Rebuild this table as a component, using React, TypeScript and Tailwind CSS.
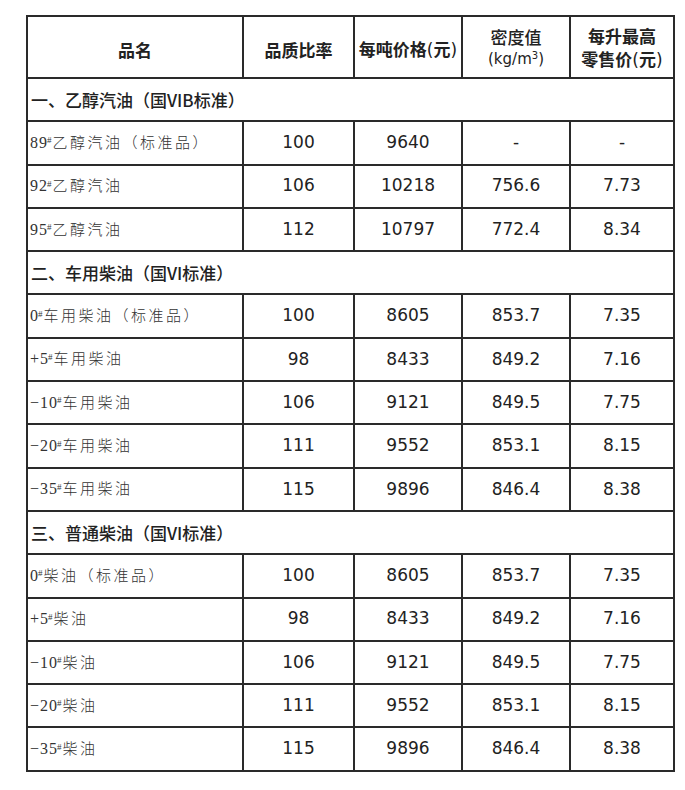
import React from "react";

type Row = {
    num: string;
    name: string;
    ratio: string;
    price: string;
    density: string;
    retail: string;
};

type Section = {
    title: string;
    rows: Row[];
};

const sections: Section[] = [
    {
        title: "一、乙醇汽油（国VIB标准）",
        rows: [
            {num: "89", name: "乙醇汽油（标准品）", ratio: "100", price: "9640", density: "-", retail: "-"},
            {num: "92", name: "乙醇汽油", ratio: "106", price: "10218", density: "756.6", retail: "7.73"},
            {num: "95", name: "乙醇汽油", ratio: "112", price: "10797", density: "772.4", retail: "8.34"},
        ],
    },
    {
        title: "二、车用柴油（国VI标准）",
        rows: [
            {num: "0", name: "车用柴油（标准品）", ratio: "100", price: "8605", density: "853.7", retail: "7.35"},
            {num: "+5", name: "车用柴油", ratio: "98", price: "8433", density: "849.2", retail: "7.16"},
            {num: "-10", name: "车用柴油", ratio: "106", price: "9121", density: "849.5", retail: "7.75"},
            {num: "-20", name: "车用柴油", ratio: "111", price: "9552", density: "853.1", retail: "8.15"},
            {num: "-35", name: "车用柴油", ratio: "115", price: "9896", density: "846.4", retail: "8.38"},
        ],
    },
    {
        title: "三、普通柴油（国VI标准）",
        rows: [
            {num: "0", name: "柴油（标准品）", ratio: "100", price: "8605", density: "853.7", retail: "7.35"},
            {num: "+5", name: "柴油", ratio: "98", price: "8433", density: "849.2", retail: "7.16"},
            {num: "-10", name: "柴油", ratio: "106", price: "9121", density: "849.5", retail: "7.75"},
            {num: "-20", name: "柴油", ratio: "111", price: "9552", density: "853.1", retail: "8.15"},
            {num: "-35", name: "柴油", ratio: "115", price: "9896", density: "846.4", retail: "8.38"},
        ],
    },
];

const cjk = "font-['Noto_Sans_CJK_SC',sans-serif]";
const num = "font-['DejaVu_Sans',sans-serif] text-[17px] text-[#222]";
const cell = "border-2 border-[#2a2a2a] p-0 align-middle";
const paren = "font-['DejaVu_Sans',sans-serif] font-normal";

const App: React.FC = () => {
    return (
        <div className="bg-white w-[685px] h-[790px] pt-[15px] pl-[26px]">
            <table className="table-fixed border-collapse w-[647px] border-2 border-[#2a2a2a]">
                <colgroup>
                    <col className="w-[216px]"/>
                    <col className="w-[111px]"/>
                    <col className="w-[108px]"/>
                    <col className="w-[108px]"/>
                    <col className="w-[104px]"/>
                </colgroup>
                <thead>
                    <tr className={`h-[62px] text-[17px] font-medium text-[#222] text-center leading-[23px] ${cjk}`}>
                        <th className={`${cell} pt-[4px]`}>品名</th>
                        <th className={`${cell} pt-[4px]`}>品质比率</th>
                        <th className={`${cell} pt-[4px]`}>
                            每吨价格<span className={paren}>(</span>元<span className={paren}>)</span>
                        </th>
                        <th className={`${cell} font-normal pt-[2px]`}>
                            <div className="font-medium">密度值</div>
                            <div className="font-['DejaVu_Sans',sans-serif] text-[15px]">
                                (kg/m<sup className="text-[10px]">3</sup>)
                            </div>
                        </th>
                        <th className={`${cell} pt-[2px]`}>
                            <div>每升最高</div>
                            <div>
                                零售价<span className={paren}>(</span>元<span className={paren}>)</span>
                            </div>
                        </th>
                    </tr>
                </thead>
                <tbody>
                    {sections.map((s) => (
                        <React.Fragment key={s.title}>
                            <tr className="h-[43.3px]">
                                <td colSpan={5} className={`${cell} pl-[3px] text-[17px] font-medium text-[#222] ${cjk}`}>
                                    {s.title}
                                </td>
                            </tr>
                            {s.rows.map((r) => (
                                <tr key={s.title + r.num} className="h-[43.3px]">
                                    <td className={`${cell} pl-[2px] text-[15px] text-[#333] tracking-[2.5px] font-light ${cjk}`}>
                                        <span className="font-['Liberation_Serif',serif] text-[16px] tracking-[1px]">
                                            {r.num.replace("-", "\u2212")}
                                        </span>
                                        <sup className="font-['Liberation_Serif',serif] text-[9px] tracking-normal -ml-[1px] mr-[1px]">#</sup>
                                        {r.name}
                                    </td>
                                    <td className={`${cell} text-center ${num}`}>{r.ratio}</td>
                                    <td className={`${cell} text-center ${num}`}>{r.price}</td>
                                    <td className={`${cell} text-center ${num}`}>{r.density}</td>
                                    <td className={`${cell} text-center ${num}`}>{r.retail}</td>
                                </tr>
                            ))}
                        </React.Fragment>
                    ))}
                </tbody>
            </table>
        </div>
    );
};

export default App;
